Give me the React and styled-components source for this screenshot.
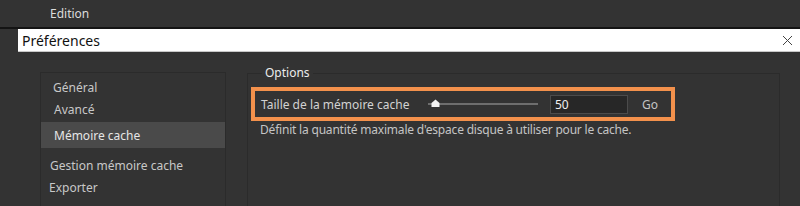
import React from "react";
import styled, { createGlobalStyle } from "styled-components";

const GlobalStyle = createGlobalStyle`
  html, body {
    margin: 0;
    padding: 0;
    background: #333333;
  }
  body {
    font-family: "Noto Sans", "Open Sans", sans-serif;
    font-size: 12px;
    color: #d0d0d0;
  }
`;

const Page = styled.div`
  width: 800px;
  height: 206px;
  overflow: hidden;
  background: #333333;
  display: flex;
  flex-direction: column;
`;

const MenuBar = styled.div`
  height: 26px;
  flex: none;
  display: flex;
  align-items: center;
  padding-left: 50px;
  padding-bottom: 1px;
  background: #333333;
  border-bottom: 2px solid #141414;
  color: #dcdcdc;
`;

const Dialog = styled.div`
  flex: 1;
  margin-left: 18px;
  display: flex;
  flex-direction: column;
  min-height: 0;
`;

const TitleBar = styled.div`
  height: 22px;
  flex: none;
  display: flex;
  align-items: center;
  justify-content: space-between;
  padding: 0 7px 0 4px;
  background: #ffffff;
  border-bottom: 1px solid #c8c8c8;
  color: #111111;
  font-size: 14px;
`;

const CloseButton = styled.div`
  width: 12px;
  height: 12px;
  display: flex;
  align-items: center;
  justify-content: center;
`;

const Body = styled.div`
  flex: 1;
  display: flex;
  gap: 21px;
  padding: 20px 20px 0 22px;
  min-height: 0;
`;

const Sidebar = styled.div`
  width: 184px;
  flex: none;
  border: 1px solid #2b2b2b;
  border-bottom: none;
  padding-top: 3px;
  display: flex;
  flex-direction: column;
`;

const NavItem = styled.div`
  height: ${p => (p.selected ? 26 : 22)}px;
  margin: ${p => (p.selected ? "2px 0 6px" : "0")};
  display: flex;
  align-items: center;
  padding-left: ${p => p.indent}px;
  background: ${p => (p.selected ? "#4a4a4a" : "transparent")};
  color: ${p => (p.selected ? "#e6e6e6" : "#c8c8c8")};
`;

const OptionsGroup = styled.fieldset`
  flex: 1;
  margin: -6px 0 0;
  padding: 0 3px;
  border: 1px solid #2b2b2b;
  border-bottom: none;
  min-width: 0;
`;

const Legend = styled.legend`
  margin-left: 11px;
  padding: 0 3px;
  color: #ececec;
  font-size: 12px;
  line-height: 14px;
`;

const Highlight = styled.div`
  width: 410px;
  height: 26px;
  margin-top: 7px;
  border: 4px solid #f3914c;
  display: flex;
  align-items: center;
  padding-left: 6px;
`;

const Label = styled.span`
  width: 167px;
  flex: none;
  color: #d2d2d2;
`;

const Slider = styled.div`
  position: relative;
  width: 110px;
  height: 12px;
  flex: none;
  display: flex;
  align-items: center;
`;

const Track = styled.div`
  width: 100%;
  height: 2px;
  background: #6e6e6e;
`;

const Thumb = styled.svg`
  position: absolute;
  left: 3px;
  top: 1px;
`;

const ValueInput = styled.div`
  width: 72px;
  height: 17px;
  margin-left: 12px;
  flex: none;
  display: flex;
  align-items: center;
  padding-left: 4px;
  background: #272727;
  border: 1px solid #4b4b4b;
  color: #f0f0f0;
`;

const Unit = styled.span`
  margin-left: 14px;
  color: #c4c4c4;
`;

const Description = styled.div`
  margin-top: 0;
  padding-left: 9px;
  color: #c4c4c4;
  letter-spacing: -0.2px;
`;

const navItems = [
  { label: "Général", indent: 12 },
  { label: "Avancé", indent: 13 },
  { label: "Mémoire cache", indent: 13, selected: true },
  { label: "Gestion mémoire cache", indent: 9 },
  { label: "Exporter", indent: 8 },
];

const App = () => (
  <Page>
    <GlobalStyle />
    <MenuBar>Edition</MenuBar>
    <Dialog>
      <TitleBar>
        Préférences
        <CloseButton>
          <svg width="11" height="11" viewBox="0 0 11 11">
            <path d="M1 1L10 10M10 1L1 10" stroke="#444" strokeWidth="1" />
          </svg>
        </CloseButton>
      </TitleBar>
      <Body>
        <Sidebar>
          {navItems.map(item => (
            <NavItem key={item.label} indent={item.indent} selected={item.selected}>
              {item.label}
            </NavItem>
          ))}
        </Sidebar>
        <OptionsGroup>
          <Legend>Options</Legend>
          <Highlight>
            <Label>Taille de la mémoire cache</Label>
            <Slider>
              <Track />
              <Thumb width="9" height="8" viewBox="0 0 9 8">
                <path d="M4.5 0.5L8.5 4V8H0.5V4Z" fill="#f2f2f2" />
              </Thumb>
            </Slider>
            <ValueInput>50</ValueInput>
            <Unit>Go</Unit>
          </Highlight>
          <Description>
            Définit la quantité maximale d'espace disque à utiliser pour le cache.
          </Description>
        </OptionsGroup>
      </Body>
    </Dialog>
  </Page>
);

export default App;
